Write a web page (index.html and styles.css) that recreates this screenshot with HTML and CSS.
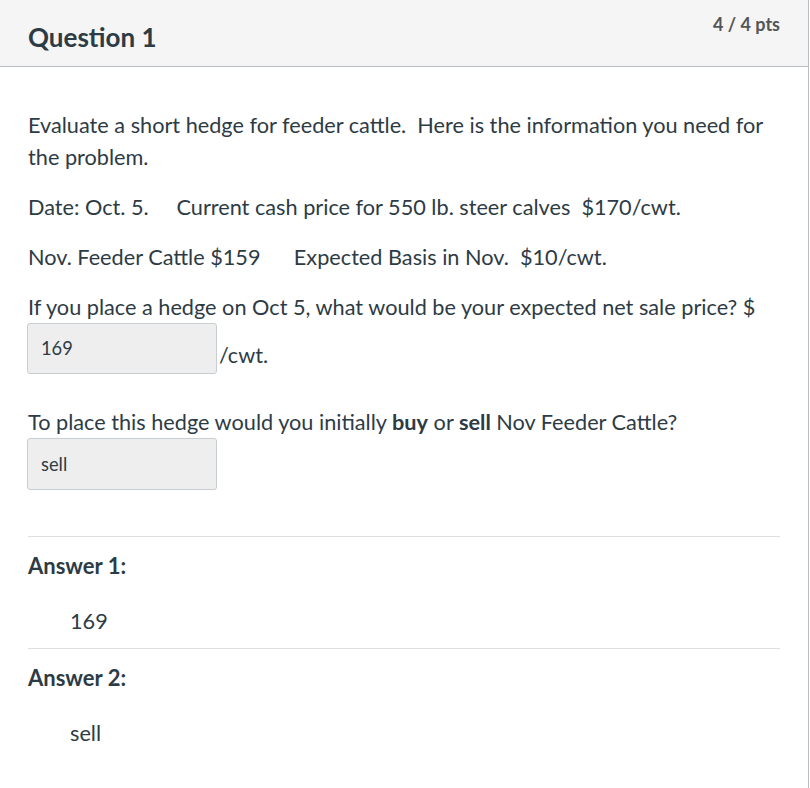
FILE: index.html
```html
<!DOCTYPE html>
<html>
<head>
<meta charset="utf-8">
<link rel="stylesheet" href="styles.css">
</head>
<body>
<div class="card">
  <div class="header">
    <h2 class="title">Question 1</h2>
    <div class="pts">4 / 4 pts</div>
  </div>
  <div class="content">
    <p>Evaluate a short hedge for feeder cattle.&nbsp; Here is the information you need for the problem.</p>
    <p>Date: Oct. 5.&nbsp;&nbsp;&nbsp;&nbsp; Current cash price for 550 lb. steer calves&nbsp; $170/cwt.</p>
    <p>Nov. Feeder Cattle $159&nbsp;&nbsp;&nbsp;&nbsp;&nbsp; Expected Basis in Nov.&nbsp; $10/cwt.</p>
    <div class="q-line">If you place a hedge on Oct 5, what would be your expected net sale price? $</div>
    <div class="input-row">
      <div class="input">169</div>
      <span class="unit">/cwt.</span>
    </div>
    <div class="q-line q2">To place this hedge would you initially <b>buy</b> or <b>sell</b> Nov Feeder Cattle?</div>
    <div class="input-row">
      <div class="input input-tall">sell</div>
    </div>
    <div class="answers">
      <div class="answer">
        <div class="answer-label">Answer 1:</div>
        <div class="answer-value">169</div>
      </div>
      <div class="answer">
        <div class="answer-label">Answer 2:</div>
        <div class="answer-value">sell</div>
      </div>
    </div>
  </div>
</div>
</body>
</html>
```
FILE: styles.css
```css
html, body {
  margin: 0;
  padding: 0;
  background: #fff;
}
body {
  font-family: Lato, "Open Sans", sans-serif;
  color: #2d3b45;
}
.card {
  width: 808px;
  height: 788px;
  border-right: 1px solid #b9bec2;
  box-sizing: content-box;
}
.header {
  height: 66px;
  background: #f5f5f5;
  border-bottom: 1px solid #b9bec2;
  display: flex;
  justify-content: space-between;
  padding: 0 28px 0 28px;
}
.title {
  margin: 0;
  font-size: 26px;
  font-weight: 700;
  line-height: 30px;
  padding-top: 22px;
}
.pts {
  font-size: 18px;
  font-weight: 700;
  color: #555;
  padding-top: 12px;
  line-height: 24px;
}
.content {
  padding: 42px 28px 0 28px;
  font-size: 21.7px;
  line-height: 32px;
}
.content p {
  margin: 0 0 18px 0;
}
.q-line {
  margin: 0;
}
.q2 {
  margin-top: 32px;
}
.input-row {
  display: flex;
  align-items: flex-end;
}
.input {
  width: 190px;
  height: 51px;
  box-sizing: border-box;
  margin-left: -1px;
  background: #eeeeee;
  border: 1px solid #c7cdd1;
  border-radius: 3px;
  font-size: 18.3px;
  line-height: 48px;
  padding: 0 13px;
  padding-bottom: 3px;
}
.input-tall {
  height: 52px;
  line-height: 50px;
}
.unit {
  margin-left: 2px;
  margin-bottom: 3px;
}
.answers {
  margin-top: 46px;
}
.answer {
  border-top: 1px solid #dcdfe2;
  padding-top: 14px;
  padding-bottom: 11px;
}
.answer-label {
  font-size: 22px;
  font-weight: 700;
  line-height: 30px;
  margin-bottom: 24px;
}
.answer-value {
  padding-left: 42px;
  line-height: 32px;
}
```
